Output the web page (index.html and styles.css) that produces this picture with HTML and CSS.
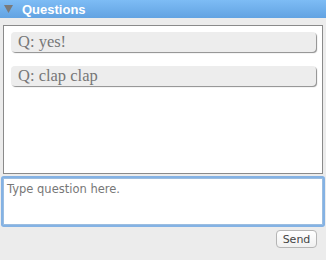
FILE: index.html
```html
<!DOCTYPE html>
<html>
<head>
<meta charset="utf-8">
<link rel="stylesheet" href="styles.css">
</head>
<body>
<div class="panel">
  <div class="header">
    <svg class="tri" width="9" height="8" viewBox="0 0 9 8"><polygon points="0,0 9,0 4.5,8" fill="#7a7a7a"/></svg>
    <span class="title">Questions</span>
  </div>
  <div class="list">
    <div class="item">Q: yes!</div>
    <div class="item">Q: clap clap</div>
  </div>
  <textarea class="input" placeholder="Type question here."></textarea>
  <div class="actions">
    <button class="send">Send</button>
  </div>
</div>
</body>
</html>
```
FILE: styles.css
```css
html, body {
  margin: 0;
  padding: 0;
  background: #ececec;
  width: 326px;
  height: 260px;
  overflow: hidden;
}
.panel {
  display: flex;
  flex-direction: column;
}
.header {
  height: 18px;
  background: linear-gradient(#7dbcf5, #62a3e2);
  display: flex;
  align-items: center;
  padding-left: 4px;
  gap: 9px;
}
.tri { display: block; }
.title {
  color: #fff;
  font-family: "Liberation Sans", Arial, sans-serif;
  font-weight: bold;
  font-size: 13px;
}
.list {
  box-sizing: border-box;
  margin: 7px 3px 0 3px;
  height: 149px;
  background: #fff;
  border: 1px solid #8a8a8a;
  padding: 6px 6px 0 7px;
  display: flex;
  flex-direction: column;
  gap: 14px;
}
.item {
  height: 20px;
  background: #ededed;
  border-radius: 4px;
  box-shadow: 1px 1px 1px rgba(0,0,0,0.45);
  font-family: "Liberation Serif", "Times New Roman", serif;
  font-size: 16.5px;
  color: #777;
  line-height: 20px;
  padding-left: 7px;
}
.input {
  box-sizing: border-box;
  margin: 4px 0 0 3px;
  width: 320px;
  height: 47px;
  border: 1px solid #9bbde0;
  box-shadow: 0 0 0 2px #84b2e4;
  border-radius: 1px;
  resize: none;
  padding: 3px 3px;
  font-family: "DejaVu Sans", sans-serif;
  font-size: 11.5px;
  color: #555;
  outline: none;
  background: #fff;
}
.input::placeholder { color: #777; }
.actions {
  display: flex;
  justify-content: flex-end;
  padding: 5px 9px 0 0;
}
.send {
  height: 18px;
  width: 41px;
  padding: 0;
  border: 1px solid #b5b5b5;
  border-radius: 4px;
  background: linear-gradient(#ffffff, #f0f0f0);
  font-family: "DejaVu Sans", sans-serif;
  font-size: 11px;
  color: #444;
}
```
